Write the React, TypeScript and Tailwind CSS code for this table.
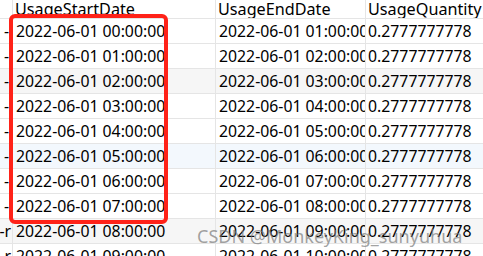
const rows = [
  ["2022-06-01 00:00:00", "2022-06-01 01:00:00", "0.2777777778"],
  ["2022-06-01 01:00:00", "2022-06-01 02:00:00", "0.2777777778"],
  ["2022-06-01 02:00:00", "2022-06-01 03:00:00", "0.2777777778"],
  ["2022-06-01 03:00:00", "2022-06-01 04:00:00", "0.2777777778"],
  ["2022-06-01 04:00:00", "2022-06-01 05:00:00", "0.2777777778"],
  ["2022-06-01 05:00:00", "2022-06-01 06:00:00", "0.2777777778"],
  ["2022-06-01 06:00:00", "2022-06-01 07:00:00", "0.2777777778"],
  ["2022-06-01 07:00:00", "2022-06-01 08:00:00", "0.2777777778"],
  ["2022-06-01 08:00:00", "2022-06-01 09:00:00", "0.2777777778"],
  ["2022-06-01 09:00:00", "2022-06-01 10:00:00", "0.2777777778"],
];

const rowBg = (i: number) => {
  if (i === 5) return "bg-[#f3f8fd]";
  if (i === 2 || i === 8) return "bg-[#f6f6f6]";
  return "bg-white";
};

export default function App() {
  return (
    <div className="relative w-[483px] h-[256px] overflow-hidden bg-white text-black font-['Noto_Sans',sans-serif] text-[15.8px]">
      {/* header */}
      <div className="grid grid-cols-[13px_203px_150px_1fr] h-[19px] leading-[18px] text-[16.2px]">
        <div className="border-r border-b border-[#e5e5e5]" />
        <div className="border-r border-b border-[#e5e5e5] pl-[2px] overflow-hidden whitespace-nowrap">UsageStartDate</div>
        <div className="border-r border-b border-[#e5e5e5] pl-[2px] overflow-hidden whitespace-nowrap">UsageEndDate</div>
        <div className="border-b border-[#e5e5e5] pl-[2px] overflow-hidden whitespace-nowrap">UsageQuantity</div>
      </div>

      {/* rows */}
      {rows.map((r, i) => (
        <div
          key={i}
          className={`grid grid-cols-[13px_203px_150px_1fr] h-[25px] leading-[24px] ${rowBg(i)}`}
        >
          <div className="border-r border-b border-[#e5e5e5] overflow-hidden whitespace-nowrap flex justify-end">
            <span className={i >= 8 ? "pr-[1px]" : "pr-[3px]"}>{i >= 8 ? "-r" : "-"}</span>
          </div>
          <div className="border-r border-b border-[#e5e5e5] pl-[3px] overflow-hidden whitespace-nowrap">{r[0]}</div>
          <div className="border-r border-b border-[#e5e5e5] pl-[3px] overflow-hidden whitespace-nowrap">{r[1]}</div>
          <div className="border-b border-[#e5e5e5] pl-[2px] overflow-hidden whitespace-nowrap">{r[2]}</div>
        </div>
      ))}

      {/* red highlight box */}
      <div className="absolute left-[9px] top-[14px] w-[159px] h-[210px] border-4 border-[#ff2218] rounded-[6px] pointer-events-none" />

      {/* watermark */}
      <div className="absolute left-[197px] top-[225px] text-[18px] leading-[22px] text-[#7a7a7a]/70 font-['Noto_Sans',sans-serif] whitespace-nowrap pointer-events-none">
        CSDN @MonkeyKing_sunyuhua
      </div>
    </div>
  );
}
